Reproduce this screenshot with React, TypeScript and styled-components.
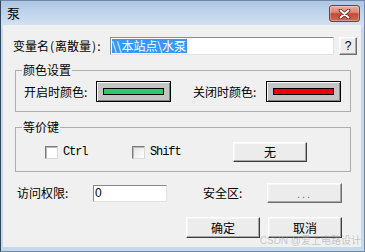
import React from "react";
import styled, { createGlobalStyle } from "styled-components";

const GlobalStyle = createGlobalStyle`
  html, body { margin: 0; padding: 0; background: #ffffff; }
  body {
    font-family: "Noto Sans CJK SC", "Liberation Sans", sans-serif;
    font-size: 12px;
    color: #000;
  }
  #root { width: 365px; height: 252px; }
`;

const CJK = `"Noto Sans CJK SC", "Liberation Sans", sans-serif`;

const Frame = styled.div`
  box-sizing: border-box;
  width: 365px;
  height: 252px;
  border: 1px solid #6f8aa9;
  border-left-color: #34465c;
  background: linear-gradient(to bottom, #aec7e5 0px, #d2e1f2 24px, #c4d8ee 30px, #c4d8ee 100%);
  display: flex;
  flex-direction: column;
`;

const TitleBar = styled.div`
  height: 24px;
  flex: none;
  display: flex;
  align-items: center;
  justify-content: space-between;
  padding: 0 4px 0 6px;
`;

const Title = styled.span`
  font-family: ${CJK};
  font-size: 13px;
  line-height: 16px;
  color: #000;
`;

const CloseButton = styled.div`
  box-sizing: border-box;
  width: 31px;
  height: 17px;
  margin-top: 1px;
  border: 1px solid #83392c;
  border-radius: 3px;
  background: linear-gradient(to bottom, #eab0a2 0%, #dc8470 42%, #c34a34 52%, #cf6a53 100%);
  box-shadow: inset 0 0 0 1px rgba(255, 255, 255, 0.3);
  display: flex;
  align-items: center;
  justify-content: center;
`;

const Client = styled.div`
  flex: 1;
  margin: 0 3px 4px 2px;
  background: #f0f0f0;
  position: relative;
  display: flex;
  flex-direction: column;
`;

const NameRow = styled.div`
  display: flex;
  align-items: center;
  height: 18px;
  margin: 12px 0 0 10px;
`;

const Label = styled.span<{ $w: number; $ml?: number }>`
  flex: none;
  width: ${(p) => p.$w}px;
  margin-left: ${(p) => p.$ml ?? 0}px;
  font-family: ${CJK};
  font-size: 12px;
  line-height: 14px;
  white-space: nowrap;
`;

const Paren = styled.span`
  padding: 0 1px;
`;

const Field = styled.div<{ $w: number; $h: number }>`
  box-sizing: border-box;
  flex: none;
  width: ${(p) => p.$w}px;
  height: ${(p) => p.$h}px;
  background: #ffffff;
  border: 1px solid;
  border-color: #8a8a8a #e2e2e2 #e2e2e2 #8a8a8a;
  padding: 0 1px;
  display: flex;
  align-items: center;
  font-family: ${CJK};
  font-size: 12px;
  line-height: 14px;
  white-space: nowrap;
  overflow: hidden;
`;

const Selected = styled.span`
  background: #3399ff;
  color: #ffffff;
  line-height: 14px;
  padding: 0 1px 0 0;
`;

const PlainText = styled.span`
  font-family: "Liberation Sans", sans-serif;
  font-size: 12px;
  line-height: 14px;
`;

const Button = styled.button<{ $w: number; $h: number; $ml?: number; $strong?: boolean }>`
  box-sizing: border-box;
  flex: none;
  width: ${(p) => p.$w}px;
  height: ${(p) => p.$h}px;
  margin: 0 0 0 ${(p) => p.$ml ?? 0}px;
  padding: 0;
  background: #ececec;
  border: 1px solid;
  border-color: ${(p) => (p.$strong ? "#ffffff #3c3c3c #3c3c3c #ffffff" : "#ffffff #6e6e6e #6e6e6e #ffffff")};
  box-shadow: inset -1px -1px 0 #a8a8a8, inset 1px 1px 0 #f6f6f6;
  font-family: ${CJK};
  font-size: 12px;
  line-height: 14px;
  color: #000;
  display: flex;
  align-items: center;
  justify-content: center;
`;

const Dots = styled.span`
  font-family: "Liberation Sans", sans-serif;
  font-size: 11px;
  letter-spacing: 2px;
  color: #707070;
  margin-top: 2px;
`;

const Group = styled.fieldset<{ $mt: number }>`
  margin: ${(p) => p.$mt}px 10px 0 12px;
  padding: 0;
  min-width: 0;
  border: 1px solid #adadad;
`;

const Legend = styled.legend`
  margin-left: 6px;
  padding: 0 1px;
  font-family: ${CJK};
  font-size: 12px;
  line-height: 14px;
`;

const GroupRow = styled.div<{ $pt: number; $pl: number }>`
  display: flex;
  align-items: center;
  padding: ${(p) => p.$pt}px 0 9px ${(p) => p.$pl}px;
`;

const ColorButton = styled.div`
  box-sizing: border-box;
  flex: none;
  width: 75px;
  height: 21px;
  border: 1px solid #000;
  background: #c4c4c4;
  box-shadow: inset 1px 1px 0 #ffffff, inset -1px -1px 0 #808080;
  padding: 6px 6px 0 6px;
`;

const Swatch = styled.div<{ $color: string }>`
  box-sizing: border-box;
  width: 61px;
  height: 7px;
  border: 1px solid #000;
  background: ${(p) => p.$color};
`;

const CheckItem = styled.label<{ $w: number }>`
  flex: none;
  width: ${(p) => p.$w}px;
  display: flex;
  align-items: center;
  gap: 5px;
`;

const CheckBox = styled.span<{ $shade?: boolean }>`
  box-sizing: border-box;
  width: 13px;
  height: 13px;
  background: ${(p) => (p.$shade ? "linear-gradient(135deg, #e2e2e2, #ffffff)" : "#ffffff")};
  border: 1px solid;
  border-color: #7c7c7c #dadada #dadada #7c7c7c;
  box-shadow: inset 1px 1px 0 #b8b8b8;
`;

const MonoText = styled.span`
  font-family: "Liberation Mono", monospace;
  font-size: 12px;
  letter-spacing: -1.1px;
  line-height: 14px;
`;

const AccessRow = styled.div`
  display: flex;
  align-items: center;
  height: 20px;
  margin: 11px 0 0 14px;
`;

const ActionRow = styled.div`
  display: flex;
  justify-content: flex-end;
  gap: 8px;
  margin-top: 14px;
  padding-right: 19px;
`;

const Watermark = styled.div`
  position: absolute;
  right: 0;
  bottom: 1px;
  font-family: "Liberation Sans", "Noto Sans CJK SC", sans-serif;
  font-size: 10px;
  line-height: 11px;
  color: rgba(160, 160, 160, 0.55);
  white-space: nowrap;
`;

export default function App() {
  return (
    <>
      <GlobalStyle />
      <Frame>
        <TitleBar>
          <Title>泵</Title>
          <CloseButton>
            <svg width="13" height="10" viewBox="0 0 13 10">
              <path d="M2.5 1.5 L10.5 8.5 M10.5 1.5 L2.5 8.5" stroke="#5a1d12" strokeWidth="3.6" strokeLinecap="round" />
              <path d="M2.5 1.5 L10.5 8.5 M10.5 1.5 L2.5 8.5" stroke="#ffffff" strokeWidth="2" strokeLinecap="round" />
            </svg>
          </CloseButton>
        </TitleBar>
        <Client>
          <NameRow>
            <Label $w={97}>
              变量名<Paren>(</Paren>离散量<Paren>)</Paren>:
            </Label>
            <Field $w={224} $h={18}>
              <Selected>\\本站点\水泵</Selected>
            </Field>
            <Button $w={18} $h={18} $ml={5}>
              <PlainText>?</PlainText>
            </Button>
          </NameRow>

          <Group $mt={8}>
            <Legend>颜色设置</Legend>
            <GroupRow $pt={4} $pl={8}>
              <Label $w={72}>开启时颜色:</Label>
              <ColorButton>
                <Swatch $color="#34c868" />
              </ColorButton>
              <Label $w={73} $ml={22}>关闭时颜色:</Label>
              <ColorButton>
                <Swatch $color="#f00000" />
              </ColorButton>
            </GroupRow>
          </Group>

          <Group $mt={8}>
            <Legend>等价键</Legend>
            <GroupRow $pt={8} $pl={29}>
              <CheckItem $w={87}>
                <CheckBox />
                <MonoText>Ctrl</MonoText>
              </CheckItem>
              <CheckItem $w={101}>
                <CheckBox $shade />
                <MonoText>Shift</MonoText>
              </CheckItem>
              <Button $w={74} $h={20} $strong>
                无
              </Button>
            </GroupRow>
          </Group>

          <AccessRow>
            <Label $w={76}>访问权限:</Label>
            <Field $w={74} $h={17}>
              <PlainText>0</PlainText>
            </Field>
            <Label $w={64} $ml={36}>安全区:</Label>
            <Button $w={75} $h={20}>
              <Dots>...</Dots>
            </Button>
          </AccessRow>

          <ActionRow>
            <Button $w={74} $h={21} $strong>
              确定
            </Button>
            <Button $w={74} $h={21} $strong>
              取消
            </Button>
          </ActionRow>

          <Watermark>CSDN @爱上电路设计</Watermark>
        </Client>
      </Frame>
    </>
  );
}
